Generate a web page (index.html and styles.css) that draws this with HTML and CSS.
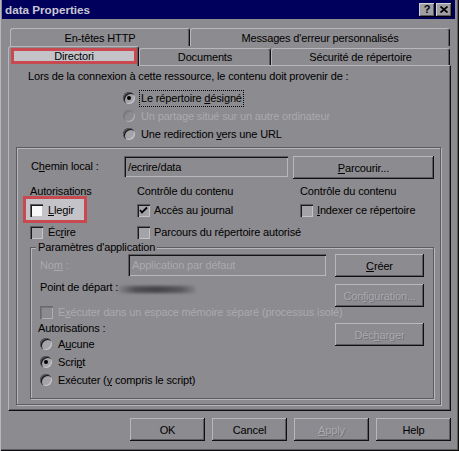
FILE: index.html
```html
<!DOCTYPE html>
<html lang="fr">
<head>
<meta charset="utf-8">
<title>data Properties</title>
<link rel="stylesheet" href="styles.css">
</head>
<body>
<div class="window">
  <div class="titlebar">
    <span class="title">data Properties</span>
    <div class="tb-buttons">
      <span class="tb-btn">?</span>
      <span class="tb-btn"><svg width="8" height="7" viewBox="0 0 8 7"><path d="M0.5 0.5 L7.5 6.5 M7.5 0.5 L0.5 6.5" stroke="#000" stroke-width="1.7" fill="none"/></svg></span>
    </div>
  </div>
  <div class="content">
    <div class="tabs">
      <div class="tab-row back">
        <div class="tab t-http">En-têtes HTTP</div>
        <div class="tab t-msg">Messages d'erreur personnalisés</div>
      </div>
      <div class="tab-row front">
        <div class="tab sel"><span class="hl">Directori</span></div>
        <div class="tab t-doc">Documents</div>
        <div class="tab t-sec">Sécurité de répertoire</div>
      </div>
    </div>
    <div class="panel">
      <div class="intro">Lors de la connexion à cette ressource, le contenu doit provenir de :</div>
      <div class="radio-list">
        <div class="ropt"><span class="radio on"></span><span class="rlabel focus">Le répertoire <u>d</u>ésigné</span></div>
        <div class="ropt disabled"><span class="radio off"></span><span class="rlabel">Un partage situé sur un autre ordinateur</span></div>
        <div class="ropt"><span class="radio"></span><span class="rlabel">Une redirection <u>v</u>ers une URL</span></div>
      </div>
      <div class="group outer">
        <div class="path-row">
          <span class="path-label">C<u>h</u>emin local :</span>
          <span class="field path-field">/ecrire/data</span>
          <span class="btn browse"><span><u>P</u>arcourir...</span></span>
        </div>
        <div class="cols heads">
          <span class="c1">Autorisations</span>
          <span class="c2">Contrôle du contenu</span>
          <span class="c3">Contrôle du contenu</span>
        </div>
        <div class="cols checks first">
          <span class="c1 chk marked"><span class="box white"></span><span><u>L</u>legir</span></span>
          <span class="c2 chk"><span class="box"><svg width="13" height="13" viewBox="0 0 13 13"><polyline points="3,6 5,8.5 10,3.5" stroke="#000" stroke-width="1.8" fill="none"/></svg></span><span>Accès au journal</span></span>
          <span class="c3 chk"><span class="box"></span><span><u>I</u>ndexer ce répertoire</span></span>
        </div>
        <div class="cols checks second">
          <span class="c1 chk"><span class="box"></span><span>Éc<u>r</u>ire</span></span>
          <span class="c2 chk"><span class="box"></span><span>Parcours du répertoire autorisé</span></span>
        </div>
        <div class="group inner">
          <span class="legend">Paramètres d'application</span>
          <div class="app-body">
            <div class="app-left">
              <div class="nom-row">
                <span class="nom-label disabled">No<u>m</u> :</span>
                <span class="field app-field disabled">Application par défaut</span>
              </div>
              <div class="point-row">
                <span class="point-label">Point de départ :</span>
                <span class="smudge"></span>
              </div>
              <div class="iso-row disabled">
                <span class="box dis"></span><span>E<u>x</u>écuter dans un espace mémoire séparé (processus isolé)</span>
              </div>
              <div class="perm-label">Autorisations :</div>
              <div class="ropt small"><span class="radio"></span><span class="rlabel">A<u>u</u>cune</span></div>
              <div class="ropt small"><span class="radio on"></span><span class="rlabel">Scri<u>p</u>t</span></div>
              <div class="ropt small"><span class="radio"></span><span class="rlabel">Exécuter (<u>y</u> compris le script)</span></div>
            </div>
            <div class="app-right">
              <span class="btn app-btn"><span><u>C</u>réer</span></span>
              <span class="btn app-btn conf disabled"><span>Con<u>f</u>iguration...</span></span>
              <span class="btn app-btn unload disabled"><span>Déc<u>h</u>arger</span></span>
            </div>
          </div>
        </div>
      </div>
    </div>
    <div class="actions">
      <span class="btn act"><span>OK</span></span>
      <span class="btn act"><span>Cancel</span></span>
      <span class="btn act disabled"><span><u>A</u>pply</span></span>
      <span class="btn act"><span>Help</span></span>
    </div>
  </div>
</div>
</body>
</html>
```
FILE: styles.css
```css
*, *::before, *::after { box-sizing: border-box; }
html, body { margin: 0; padding: 0; }
body {
  background: #8c8b8f;
  font-family: "Liberation Sans", Arial, sans-serif;
  font-size: 11px;
  letter-spacing: -0.15px;
  color: #000;
}
u { text-decoration: underline; text-underline-offset: 1px; }

.window {
  width: 459px;
  height: 451px;
  padding: 0 4px 0 2px;
  background: #8c8b8f;
  box-shadow: inset 1px 0 0 #b8b8bc, inset -1px -1px 0 #101010, inset -2px -2px 0 #5c5c60;
  overflow: hidden;
}

/* title bar */
.titlebar {
  height: 19px;
  background: #00005c;
  display: flex;
  align-items: center;
  justify-content: space-between;
  padding: 0 3px 0 3px;
}
.title {
  color: #c8c8d2;
  font-weight: bold;
  font-size: 11.7px;
  letter-spacing: 0;
}
.tb-buttons { display: flex; gap: 1px; }
.tb-btn {
  width: 16px;
  height: 14px;
  background: #a0a0a4;
  box-shadow: inset -1px -1px 0 #000, inset 1px 1px 0 #d0d0d4, inset -2px -2px 0 #5c5c60;
  display: flex;
  align-items: center;
  justify-content: center;
  font-weight: bold;
  font-size: 11px;
  letter-spacing: 0;
  padding-bottom: 1px;
}

.content { padding: 0 4px 0 6px; }

/* tabs */
.tabs { margin-top: 9px; }
.tab-row { display: flex; }
.tab-row.back { height: 18px; padding-left: 2px; }
.tab-row.front { height: 19px; align-items: flex-end; position: relative; z-index: 2; }
.tab {
  display: flex;
  align-items: center;
  justify-content: center;
  background: #8c8b8f;
  border-top: 1px solid #b8b8bc;
  border-left: 1px solid #b8b8bc;
  border-right: 1px solid #101010;
  border-radius: 3px 3px 0 0;
  box-shadow: inset -1px 0 0 #5c5c60;
  white-space: nowrap;
}
.back .tab { height: 18px; padding-top: 1px; }
.t-http { width: 180px; }
.t-msg { width: 260px; }
.front .tab { height: 17px; }
.tab.sel {
  width: 131px;
  height: 20px;
  margin-bottom: -1px;
  align-items: flex-start;
  justify-content: flex-start;
  padding: 1px 1px 0 2px;
}
.hl {
  display: flex;
  align-items: center;
  justify-content: center;
  width: 126px;
  height: 16px;
  border: 3px solid #c84a50;
  background: #c4c3c8;
}
.t-doc { width: 132px; }
.t-sec { width: 179px; }

/* panel */
.panel {
  width: 443px;
  height: 346px;
  border-top: 1px solid #b8b8bc;
  border-left: 1px solid #b8b8bc;
  border-right: 1px solid #101010;
  border-bottom: 1px solid #101010;
  box-shadow: inset -1px -1px 0 #5c5c60;
  position: relative;
  z-index: 1;
}
.intro {
  margin-top: 4px;
  padding-left: 19px;
  line-height: 13px;
  white-space: nowrap;
}
.radio-list { margin-top: 6px; padding-left: 114px; }
.ropt { display: flex; align-items: center; height: 18px; white-space: nowrap; }
.radio {
  width: 12px;
  height: 12px;
  border-radius: 50%;
  background: #a4a4a8;
  box-shadow: inset 1px 1px 0 #5c5c60, inset 2px 2px 0 #1a1a1a, inset -1px -1px 0 #c4c4c8;
  display: flex;
  align-items: center;
  justify-content: center;
  flex: none;
}
.radio.on::after {
  content: "";
  width: 4px;
  height: 4px;
  border-radius: 50%;
  background: #000;
}
.radio.off {
  background: #8c8b8f;
  box-shadow: inset 1px 1px 0 #7a7a7e, inset 2px 2px 0 #808084, inset -1px -1px 0 #b0b0b4;
}
.rlabel { margin-left: 6px; }
.rlabel.focus {
  margin-left: 4px;
  border: 1px dotted #000;
  padding: 1px 1px 1px 1px;
  line-height: 13px;
}
.disabled { color: #aaaaae; }
.btn.disabled span, .disabled.btn { color: #aaaaae; text-shadow: 1px 1px 0 #747478; }

/* group boxes */
.group {
  border: 1px solid #5c5c60;
  box-shadow: inset 1px 1px 0 #b8b8bc, 1px 1px 0 #b8b8bc;
  position: relative;
}
.group.outer {
  margin-top: 4px;
  margin-left: 7px;
  width: 425px;
  height: 258px;
}
.path-row {
  display: flex;
  align-items: flex-start;
  margin-top: 8px;
  height: 23px;
}
.path-label {
  padding-left: 14px;
  width: 107px;
  line-height: 21px;
  white-space: nowrap;
}
.field {
  background: #8c8b8f;
  box-shadow: inset 1px 1px 0 #5c5c60, inset 2px 2px 0 #141414, inset -1px -1px 0 #b8b8bc;
  padding-left: 4px;
  display: flex;
  align-items: center;
  white-space: nowrap;
}
.path-field { width: 164px; height: 21px; }
.btn {
  background: #8c8b8f;
  box-shadow: inset -1px -1px 0 #101010, inset 1px 1px 0 #b8b8bc, inset -2px -2px 0 #5c5c60;
  display: flex;
  align-items: center;
  justify-content: center;
  white-space: nowrap;
  flex: none;
}
.browse { width: 141px; height: 23px; margin-left: 5px; }

.cols { display: flex; white-space: nowrap; }
.c1 { padding-left: 13px; width: 120px; }
.c2 { width: 163px; }
.c3 { flex: 1; }
.heads { margin-top: 5px; height: 14px; line-height: 14px; }
.checks { height: 14px; align-items: center; }
.checks.first { margin-top: 5px; }
.checks.second { margin-top: 8px; }
.chk { display: flex; align-items: center; gap: 4px; }
.c1.chk { gap: 5px; }
.box {
  width: 13px;
  height: 13px;
  background: #a4a4a8;
  box-shadow: inset 1px 1px 0 #5c5c60, inset 2px 2px 0 #1a1a1a, inset -1px -1px 0 #c4c4c8;
  flex: none;
  display: block;
}
.box svg { display: block; }
.box.white { background: #f8f8f8; }
.box.dis {
  background: #8c8b8f;
  box-shadow: inset 1px 1px 0 #6a6a6e, inset 2px 2px 0 #76767a, inset -1px -1px 0 #b0b0b4;
}
.marked { position: relative; z-index: 0; }
.marked::before {
  content: "";
  position: absolute;
  left: 6px;
  top: -8px;
  width: 64px;
  height: 27px;
  border: 3px solid #c84a50;
  background: #c4c3c8;
  z-index: -1;
}

.group.inner {
  margin-top: 8px;
  margin-left: 13px;
  width: 404px;
  height: 152px;
}
.legend {
  position: absolute;
  left: 5px;
  top: -8px;
  padding: 0 2px;
  line-height: 14px;
  background: #8c8b8f;
  white-space: nowrap;
}
.app-body { display: flex; padding-top: 6px; }
.app-left { width: 295px; }
.app-right { margin-left: 9px; display: flex; flex-direction: column; }
.nom-row { display: flex; height: 22px; align-items: center; }
.nom-label { padding-left: 9px; width: 97px; }
.app-field { width: 198px; height: 22px; }
.point-row { display: flex; align-items: center; height: 18px; margin-top: 2px; }
.point-label { padding-left: 9px; width: 87px; white-space: nowrap; }
.smudge {
  width: 78px;
  height: 7px;
  margin-top: 5px;
  border-radius: 4px;
  background: linear-gradient(90deg, rgba(70,70,74,0.1), #505054 22%, #444448 50%, #58585c 80%, rgba(80,80,84,0.15));
  filter: blur(1.6px);
}
.iso-row {
  display: flex;
  align-items: center;
  gap: 5px;
  height: 16px;
  margin-top: 8px;
  padding-left: 9px;
  white-space: nowrap;
}
.perm-label { margin-top: 1px; height: 14px; line-height: 14px; padding-left: 7px; }
.ropt.small { padding-left: 9px; }
.app-btn { width: 89px; height: 23px; }
.conf { margin-top: 7px; }
.unload { margin-top: 16px; }

/* bottom actions */
.actions {
  display: flex;
  justify-content: flex-end;
  gap: 7px;
  margin-top: 7px;
}
.act { width: 75px; height: 23px; }
```
